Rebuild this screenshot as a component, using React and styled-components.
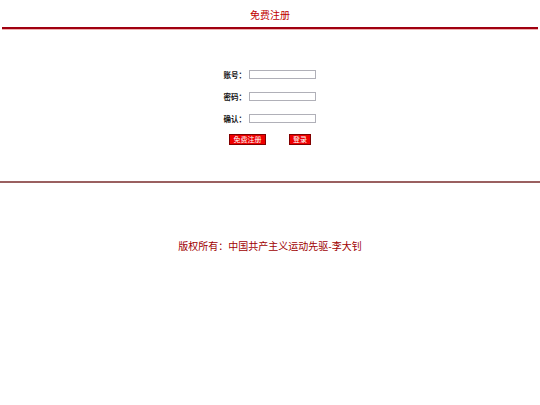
import React from 'react';
import styled, { createGlobalStyle } from 'styled-components';

const GlobalStyle = createGlobalStyle`
  html, body {
    margin: 0;
    padding: 0;
    background: #fff;
  }
  body {
    font-family: "Noto Sans CJK SC", "Liberation Sans", sans-serif;
  }
`;

const Page = styled.div`
  width: 540px;
  display: flex;
  flex-direction: column;
`;

const Title = styled.h1`
  margin: 0;
  height: 27px;
  display: flex;
  align-items: center;
  justify-content: center;
  padding-top: 2px;
  box-sizing: border-box;
  font-size: 10px;
  font-weight: normal;
  color: #c00000;
`;

const TopRule = styled.div`
  margin: 0 2px;
  height: 2px;
  background: #a00010;
  box-shadow: 0 1px 0 #f0b0b0;
`;

const Form = styled.form`
  margin-top: 41px;
  display: flex;
  flex-direction: column;
  align-items: center;
  gap: 13px;
`;

const Row = styled.div`
  display: flex;
  align-items: center;
  height: 9px;
  padding-right: 2px;
`;

const Label = styled.label`
  width: 24px;
  text-align: right;
  font-size: 7.5px;
  font-weight: bold;
  color: #111;
  margin-right: 3px;
  white-space: nowrap;
`;

const Input = styled.input`
  width: 67px;
  height: 9px;
  box-sizing: border-box;
  border: 1px solid #b0b0b8;
  padding: 0;
  margin: 0;
  background: #fff;
`;

const Buttons = styled.div`
  display: flex;
  gap: 23px;
  margin-top: -2px;
`;

const Button = styled.button`
  width: ${p => p.$w}px;
  height: 11px;
  padding: 0;
  margin: 0;
  border: 1px solid #800000;
  background: #ee0000;
  color: #fff;
  font-family: "Noto Sans CJK SC", sans-serif;
  font-size: 7px;
  line-height: 9px;
`;

const BottomRule = styled.div`
  margin-top: 36px;
  height: 2px;
  background: #9a6060;
`;

const Footer = styled.p`
  margin: 55px 0 0;
  text-align: center;
  font-size: 10px;
  color: #a00000;
`;

export default function App() {
  return (
    <>
      <GlobalStyle />
      <Page>
        <Title>免费注册</Title>
        <TopRule />
        <Form onSubmit={e => e.preventDefault()}>
          <Row>
            <Label>账号：</Label>
            <Input type="text" />
          </Row>
          <Row>
            <Label>密码：</Label>
            <Input type="password" />
          </Row>
          <Row>
            <Label>确认：</Label>
            <Input type="password" />
          </Row>
          <Buttons>
            <Button $w={37}>免费注册</Button>
            <Button $w={22}>登录</Button>
          </Buttons>
        </Form>
        <BottomRule />
        <Footer>版权所有：中国共产主义运动先驱-李大钊</Footer>
      </Page>
    </>
  );
}
